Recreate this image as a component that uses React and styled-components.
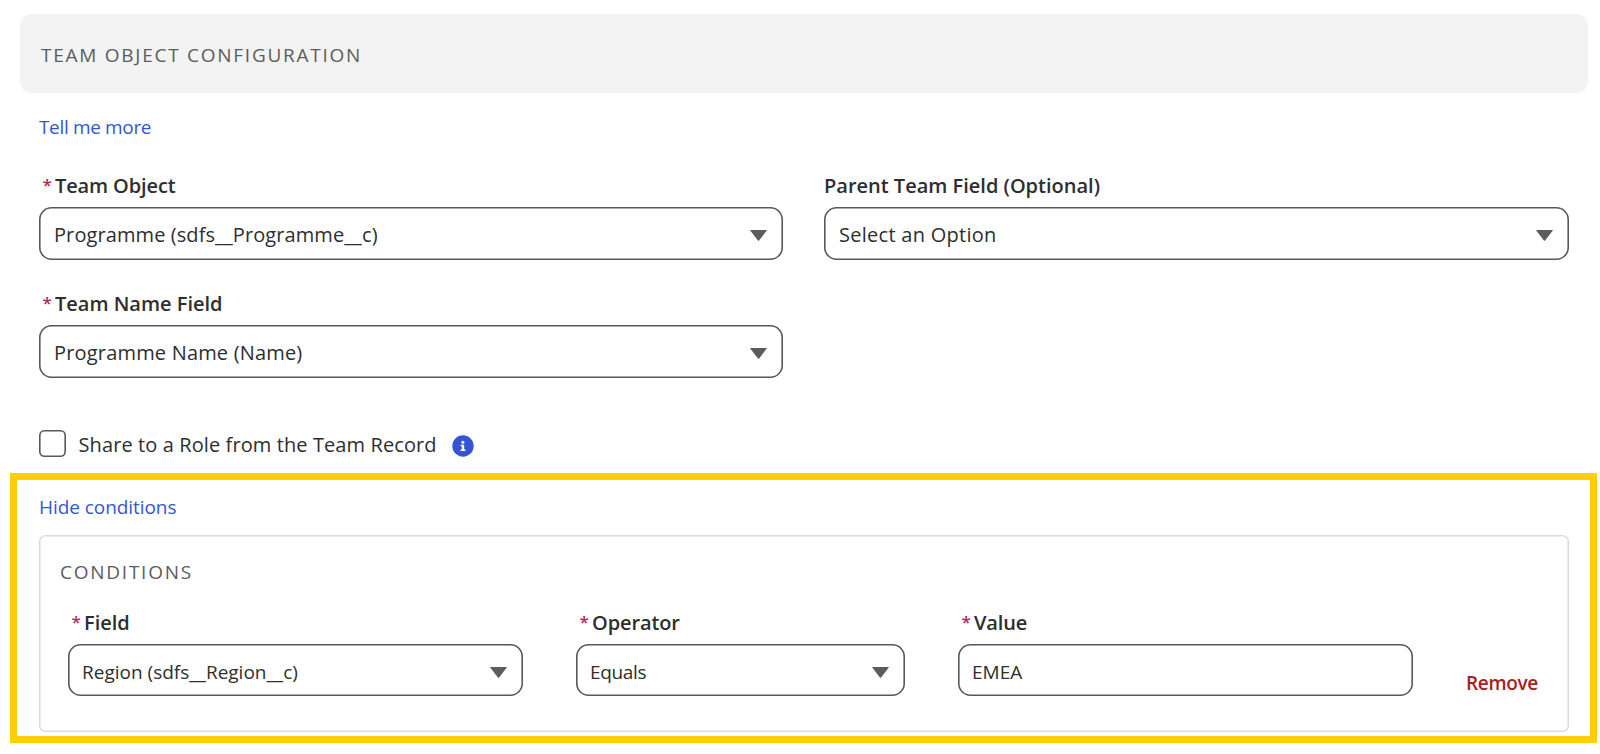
import React from "react";
import styled, { createGlobalStyle } from "styled-components";

const GlobalStyle = createGlobalStyle`
  body {
    margin: 0;
    background: #fff;
    color: #2e2e2e;
    font-family: "Open Sans", "Noto Sans", sans-serif;
    font-size: 20px;
  }
  *, *::before, *::after { box-sizing: border-box; }
`;

const Page = styled.main`
  width: 1600px;
  height: 754px;
  padding-top: 14px;
  overflow: hidden;
`;

const SectionHeader = styled.header`
  display: flex;
  align-items: center;
  height: 79px;
  margin: 0 12px 0 20px;
  padding: 2px 21px 0;
  border-radius: 12px;
  background: #f3f3f3;
`;

const Title = styled.h2`
  margin: 0;
  color: #5c5c5c;
  font-size: 19px;
  font-weight: 400;
  line-height: 26px;
  letter-spacing: ${(p) => p.$track ?? 1.74}px;
  text-transform: uppercase;
`;

const Link = styled.a`
  display: block;
  width: max-content;
  color: #3455d6;
  font-size: 19px;
  line-height: 26px;
  letter-spacing: ${(p) => p.$track ?? 0}px;
  text-decoration: none;
`;

const Body = styled.section`
  padding: 21px 31px 0 39px;
`;

const FieldGrid = styled.div`
  display: grid;
  grid-template-columns: 744px 745px;
  column-gap: 41px;
  row-gap: 30.5px;
  margin-top: 32px;
`;

const Field = styled.div`
  display: flex;
  flex-direction: column;
  gap: 7px;
`;

const Label = styled.label`
  display: flex;
  padding-left: ${(p) => (p.$required ? 3.5 : 0)}px;
  font-weight: 600;
  line-height: 28px;
  letter-spacing: ${(p) => p.$track ?? 0}px;
  white-space: nowrap;
`;

const Required = styled.abbr`
  width: 12.5px;
  color: #b02a57;
  font-size: 17px;
  font-weight: 600;
  line-height: 25px;
  letter-spacing: 0;
`;

const Control = styled.div`
  display: flex;
  align-items: center;
  justify-content: space-between;
  height: 52.5px;
  padding: ${(p) => (p.$compact ? "3px 16px 0 14px" : "3px 16px 0 15px")};
  border-radius: 12.5px;
  box-shadow: inset 0 0 0 1.6px #585858;
  font-size: ${(p) => (p.$compact ? 19 : 20)}px;
  line-height: 28px;
  letter-spacing: ${(p) => p.$track ?? 0}px;
`;

const Arrow = styled.svg`
  width: 17px;
  height: 11px;
  margin-top: 1px;
  fill: #5c5c5c;
  flex: none;
`;

const CheckRow = styled.div`
  display: flex;
  align-items: center;
  height: 27px;
  margin-top: 52.5px;
  letter-spacing: 0.1px;
`;

const CheckLabel = styled.span`
  padding-top: 2px;
`;

const Checkbox = styled.span`
  width: 27px;
  height: 27px;
  margin-right: 12.5px;
  border-radius: 5.5px;
  box-shadow: inset 0 0 0 1.6px #585858;
`;

const InfoIcon = styled.svg`
  width: 22px;
  height: 22px;
  margin: 5px 0 0 15px;
`;

const Highlight = styled.section`
  width: 1587px;
  height: 270px;
  margin: 16px 0 0 10px;
  padding: 14px 21px 0 22px;
  border: 7px solid #ffce06;
`;

const Card = styled.div`
  height: 197px;
  margin-top: 14.6px;
  padding: 24px 29px 0;
  border-radius: 6px;
  box-shadow: inset 0 0 0 1.5px #d7dbe4;

  ${Title} {
    margin-left: -8px;
  }
`;

const ConditionRow = styled.div`
  display: grid;
  grid-template-columns: 455px 329px 455px auto;
  column-gap: 53px;
  margin-top: 24.4px;
`;

const RemoveButton = styled.button`
  align-self: end;
  justify-self: start;
  margin: 0;
  padding: 0;
  border: 0;
  background: none;
  color: #a4221d;
  font: 600 19px/26px "Open Sans", "Noto Sans", sans-serif;
  letter-spacing: -0.35px;
`;

function SelectField({ label, required, value, select = true, compact, track, labelTrack }) {
  return (
    <Field>
      <Label $required={required} $track={labelTrack}>
        {required && <Required>*</Required>}
        {label}
      </Label>
      <Control $compact={compact} $track={track}>
        <span>{value}</span>
        {select && (
          <Arrow viewBox="0 0 17 11">
            <path d="M0.7 0h15.6q.9 0 .3.8L9.1 10.5q-.6.7-1.2 0L.4.8Q-.2 0 .7 0z" />
          </Arrow>
        )}
      </Control>
    </Field>
  );
}

export default function App() {
  return (
    <Page>
      <GlobalStyle />
      <SectionHeader>
        <Title>Team Object Configuration</Title>
      </SectionHeader>
      <Body>
        <Link $track={-0.35}>Tell me more</Link>
        <FieldGrid>
          <SelectField required label="Team Object" labelTrack={-0.12} value="Programme (sdfs__Programme__c)" track={0.09} />
          <SelectField label="Parent Team Field (Optional)" value="Select an Option" track={0.27} />
          <SelectField required label="Team Name Field" value="Programme Name (Name)" track={0.18} />
        </FieldGrid>
        <CheckRow>
          <Checkbox />
          <CheckLabel>Share to a Role from the Team Record</CheckLabel>
          <InfoIcon viewBox="0 0 22 22">
            <circle cx="11" cy="11" r="10.7" fill="#3554d4" />
            <circle cx="10.9" cy="7.2" r="1.5" fill="#fff" />
            <path d="M8.7 9.7h3.5v4.7h1.2v1.5H8.5v-1.5h1.3v-3.2H8.7z" fill="#fff" />
          </InfoIcon>
        </CheckRow>
      </Body>
      <Highlight>
        <Link $track={-0.06}>Hide conditions</Link>
        <Card>
          <Title $track={1.75}>Conditions</Title>
          <ConditionRow>
            <SelectField compact required label="Field" value="Region (sdfs__Region__c)" />
            <SelectField compact required label="Operator" labelTrack={-0.1} value="Equals" track={-0.35} />
            <SelectField compact required label="Value" labelTrack={-0.15} value="EMEA" select={false} />
            <RemoveButton>Remove</RemoveButton>
          </ConditionRow>
        </Card>
      </Highlight>
    </Page>
  );
}
